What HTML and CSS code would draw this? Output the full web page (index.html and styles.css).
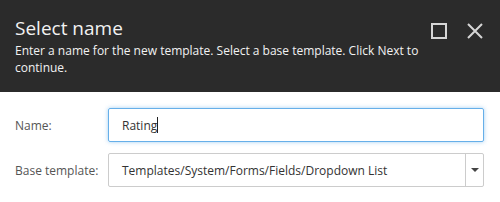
FILE: index.html
```html
<!DOCTYPE html>
<html>
<head>
<meta charset="utf-8">
<title>Select name</title>
<link rel="stylesheet" href="styles.css">
</head>
<body>

<div class="dialog_head">
  <div class="head_text">
    <h1>Select name</h1>
    <p>Enter a name for the new template. Select a base template. Click Next to continue.</p>
  </div>
  <div class="head_buttons">
    <span class="icon_btn">
      <svg width="16" height="16" viewBox="0 0 16 16"><rect x="1" y="1" width="14" height="14" fill="none" stroke="#d6d6d6" stroke-width="2"/></svg>
    </span>
    <span class="icon_btn">
      <svg width="16" height="16" viewBox="0 0 16 16"><path d="M1 1 L15 15 M15 1 L1 15" stroke="#d6d6d6" stroke-width="2" fill="none"/></svg>
    </span>
  </div>
</div>

<div class="dialog_body">
  <div class="row">
    <label class="field_label">Name:</label>
    <div class="field name_field">Rating<span class="caret"></span></div>
  </div>
  <div class="row">
    <label class="field_label">Base template:</label>
    <div class="field select_field">
      <span class="select_text">Templates/System/Forms/Fields/Dropdown List</span>
      <span class="select_arrow"></span>
    </div>
  </div>
</div>

</body>
</html>
```

FILE: styles.css
```css
* {
    box-sizing: border-box;
}
body {
    margin: 0;
    font-family: "Open Sans", "Liberation Sans", sans-serif;
    background-color: #fff;
}
.dialog_head {
    background-color: #2b2b2b;
    color: #f2f2f2;
    height: 92px;
    display: flex;
    padding: 0 17px 0 15px;
}
.head_text {
    flex: 1;
}
.head_text h1 {
    margin: 0;
    padding-top: 15px;
    font-size: 19px;
    font-weight: normal;
    line-height: 26px;
}
.head_text p {
    margin: 1px 0 0 0;
    font-size: 12px;
    line-height: 17px;
    max-width: 470px;
}
.head_buttons {
    display: flex;
    gap: 20px;
    padding-top: 22px;
    padding-left: 10px;
}
.icon_btn {
    width: 16px;
    height: 16px;
}
.dialog_body {
    padding: 16px 16px 0 15px;
}
.row {
    display: flex;
    align-items: center;
    margin-bottom: 11px;
}
.field_label {
    width: 93px;
    font-size: 12px;
    color: #555;
}
.field {
    flex: 1;
    height: 34px;
    border: 1px solid #ccc;
    border-radius: 2px;
    font-size: 12px;
    color: #333;
    display: flex;
    align-items: center;
    padding-left: 13px;
}
.name_field {
    border-color: #66afe9;
    box-shadow: 0 0 4px rgba(102, 175, 233, 0.6);
}
.caret {
    display: inline-block;
    width: 1px;
    height: 16px;
    background-color: #222;
}
.select_field {
    padding-right: 0;
}
.select_text {
    flex: 1;
}
.select_arrow {
    width: 18px;
    height: 100%;
    border-left: 1px solid #ccc;
    position: relative;
}
.select_arrow::after {
    content: "";
    position: absolute;
    left: 5px;
    top: 14px;
    border-left: 4px solid transparent;
    border-right: 4px solid transparent;
    border-top: 4px solid #444;
}
```
